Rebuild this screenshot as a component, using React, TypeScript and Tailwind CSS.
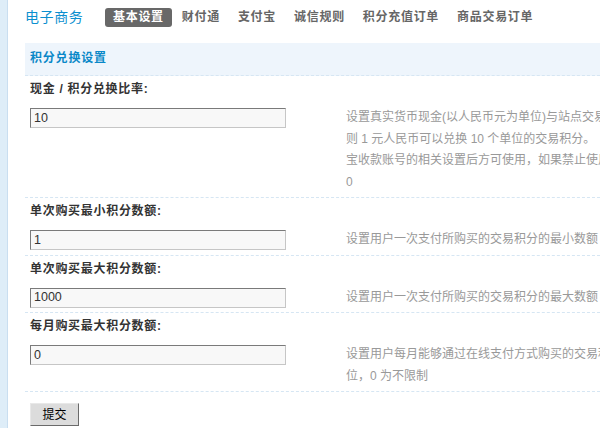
import React from "react";

const font = { fontFamily: '"Liberation Sans", "Noto Sans CJK SC", sans-serif' };

function Field({
  label,
  value,
  lines,
}: {
  label: string;
  value: string;
  lines: string[];
}) {
  return (
    <div className="border-b border-dashed border-[#d6e6f3]">
      <div className="h-[27px] pl-[5px] pt-[6px] text-[12px] font-bold leading-[14px] tracking-[0.7px] text-[#333] whitespace-nowrap">
        {label}
      </div>
      <div className="flex items-start pb-[4px] pt-[4px] pl-[5px]">
        <div className="w-[316px] shrink-0">
          <div className="mt-[1px] flex h-[20px] w-[256px] items-center border border-t-[#7a7a7a] border-l-[#7a7a7a] border-r-[#c6c6c6] border-b-[#c6c6c6] bg-[#f8f8f8] pl-[3px] text-[12.5px] text-[#333]">
            {value}
          </div>
        </div>
        <div className="text-[12px] leading-[21.5px] text-[#999] whitespace-nowrap">
          {lines.map((l, i) => (
            <div key={i}>{l}</div>
          ))}
        </div>
      </div>
    </div>
  );
}

export default function App() {
  const tabs = ["基本设置", "财付通", "支付宝", "诚信规则", "积分充值订单", "商品交易订单"];
  return (
    <div className="flex h-[428px] w-[600px] overflow-hidden bg-white" style={font}>
      <div className="w-[8px] shrink-0 border-r border-[#c9def0] bg-[#deedf8]" />
      <div className="min-w-0 flex-1 pl-[17px] pt-[8px]">
        <div className="flex h-[19px] items-center">
          <div className="w-[80px] shrink-0 text-[14px] leading-[19px] tracking-[0.6px] text-[#0b8fcf]">
            电子商务
          </div>
          <div className="flex items-center gap-[2px] whitespace-nowrap">
            {tabs.map((t, i) => (
              <div
                key={t}
                className={
                  i === 0
                    ? "h-[19px] rounded-[3px] bg-[#686868] px-[8px] text-[12px] font-bold leading-[19px] tracking-[0.7px] text-white"
                    : "h-[19px] px-[8px] text-[12px] font-bold leading-[19px] tracking-[0.7px] text-[#666]"
                }
              >
                {t}
              </div>
            ))}
          </div>
        </div>
        <div className="mt-[16px] h-[33px] border-b border-dashed border-[#d6e6f3] bg-[#eef5fc] pl-[5px] pt-[8px] text-[12px] font-bold leading-[14px] tracking-[0.8px] text-[#0a88c8]">
          积分兑换设置
        </div>
        <Field
          label="现金 / 积分兑换比率:"
          value="10"
          lines={[
            "设置真实货币现金(以人民币元为单位)与站点交易积分间的兑换比率，例如设置为 10，",
            "则 1 元人民币可以兑换 10 个单位的交易积分。",
            "宝收款账号的相关设置后方可使用，如果禁止使用积分充值功能，请设置为",
            "0",
          ]}
        />
        <Field
          label="单次购买最小积分数额:"
          value="1"
          lines={["设置用户一次支付所购买的交易积分的最小数额"]}
        />
        <Field
          label="单次购买最大积分数额:"
          value="1000"
          lines={["设置用户一次支付所购买的交易积分的最大数额"]}
        />
        <Field
          label="每月购买最大积分数额:"
          value="0"
          lines={[
            "设置用户每月能够通过在线支付方式购买的交易积分的最大数额，单",
            "位，0 为不限制",
          ]}
        />
        <div className="pl-[5px] pt-[11px]">
          <button className="flex h-[23px] w-[49px] items-center justify-center border border-t-[#e8e8e8] border-l-[#e8e8e8] border-r-[#6a6a6a] border-b-[#6a6a6a] bg-[#dcdcdc] text-[12px] text-black">
            提交
          </button>
        </div>
      </div>
    </div>
  );
}
